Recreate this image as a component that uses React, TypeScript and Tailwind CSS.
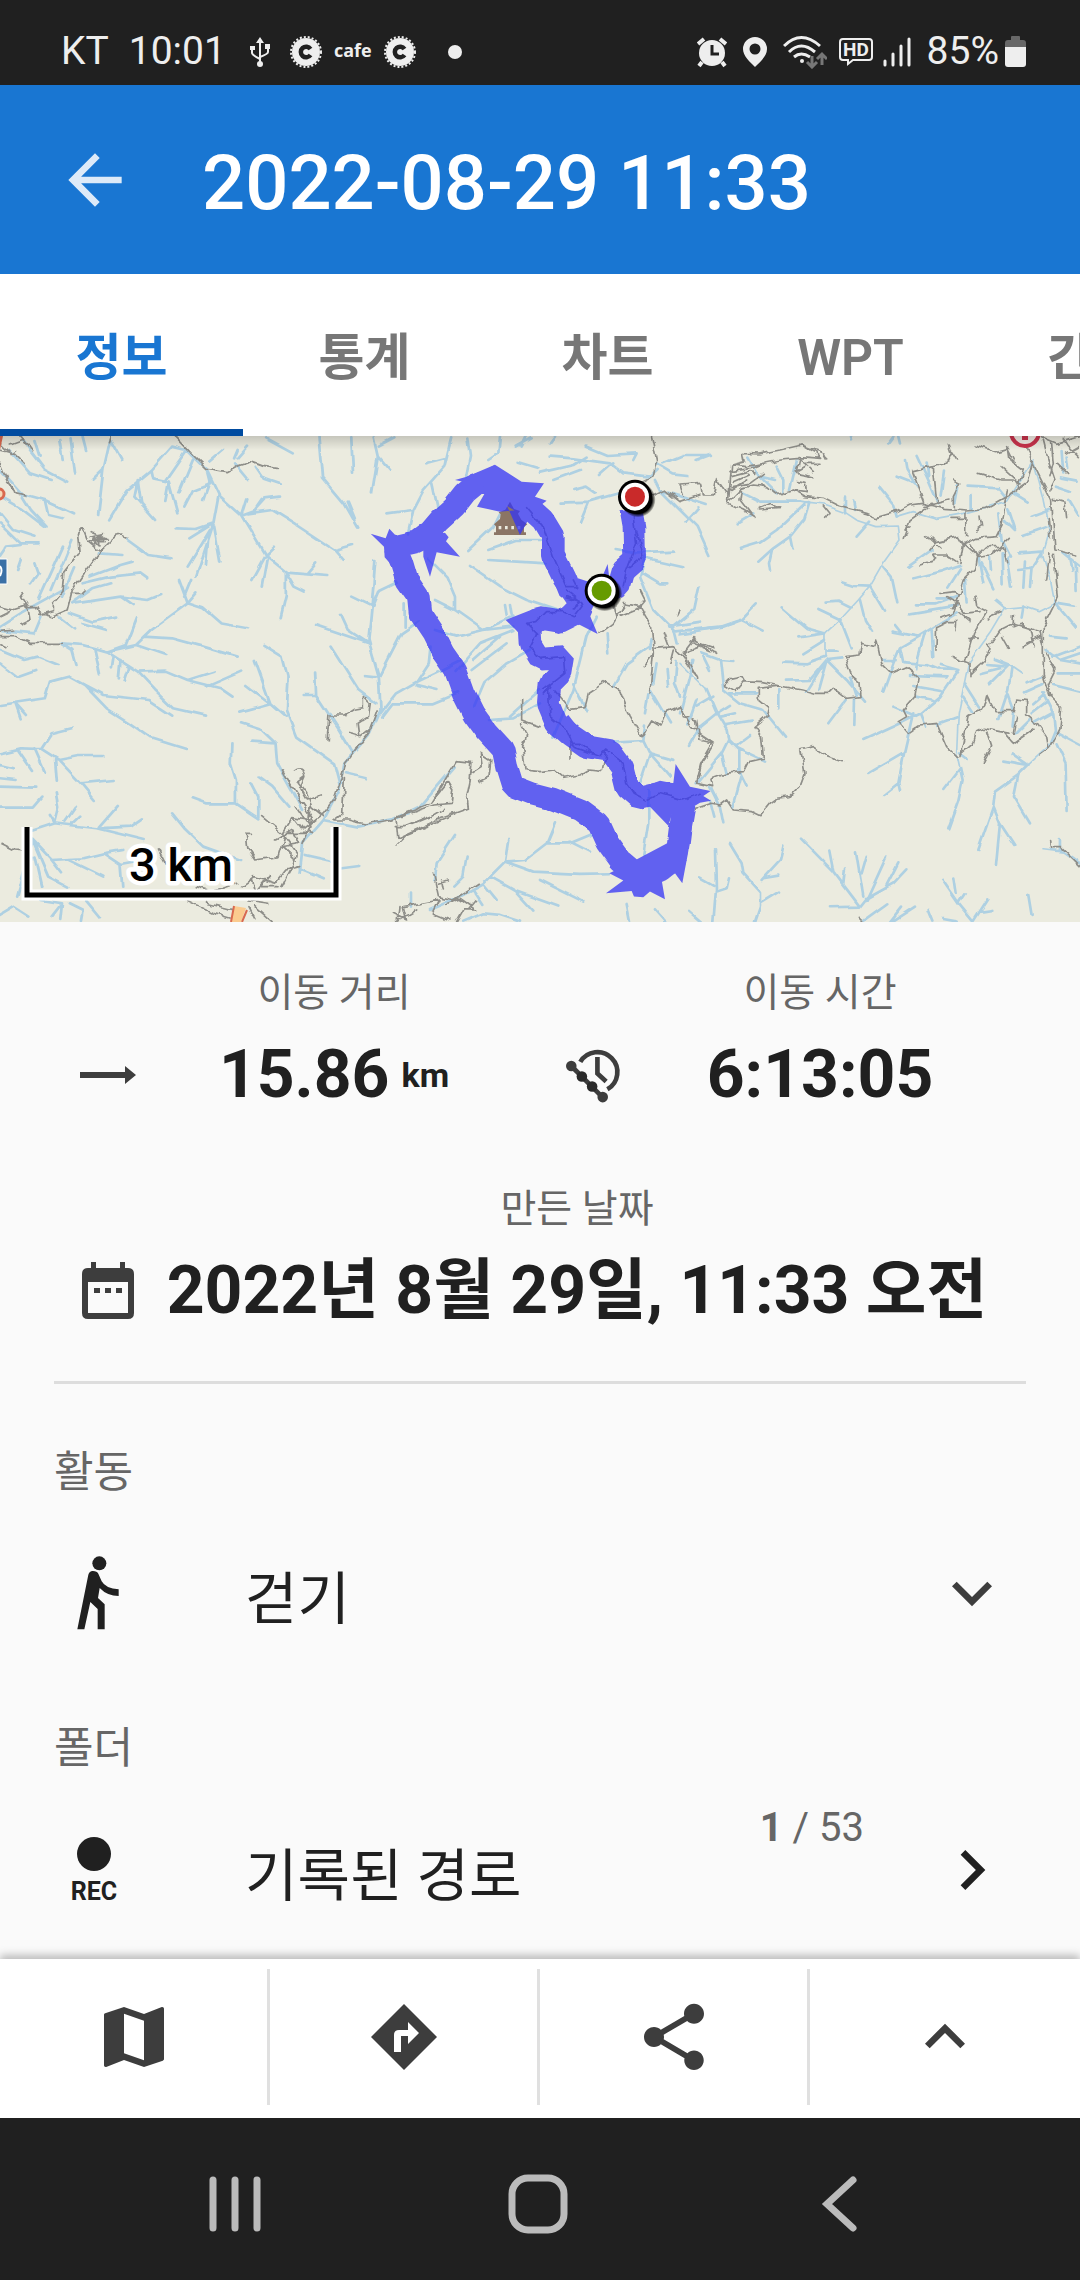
import { useState } from "react";
import { MdArrowBack, MdExpandLess, MdExpandMore, MdChevronRight, MdMap, MdShare } from "react-icons/md";

const tabs = ["정보", "통계", "차트", "WPT", "간격"];

// Each map sheet is drawn at three times the size it is shown at.
const westStreams =
  "M500 50L440 120 370 180 320 265M320 30L300 120 285 255M300 120L270 150M320 30L352 90M205 25L218 130M240 20L250 60M175 30L185 90M65 30L130 120 195 155M100 30L115 80M130 120L85 60M30 60L90 130 150 150M0 120L60 190 130 210 215 250M0 200L60 235 130 290M60 190L90 240 135 290M130 210L140 255 180 265M0 250L40 300 100 320M0 280L60 340 115 340M500 50L540 60 600 120 635 195 620 280 570 440M540 60L480 150M560 90L520 190M600 120L610 160 560 180 535 230M610 150L590 210M440 120L445 145 490 155 515 250M490 155L480 210M400 150L390 200 450 270M400 150L410 220M620 280L570 297 510 295M620 280L550 325M610 300L545 410M605 320L598 405M622 290L640 395" +
  "M635 195L700 255 770 375 830 425 830 500 815 565M700 255L740 240 770 205 810 200M720 250L790 240 860 285 970 360 1022 345M970 360L995 390M740 240L760 210M700 255L715 205M770 375L795 350M770 375L730 450M775 385L760 470M830 425L855 470 885 485M830 425L890 430 950 435M890 430L915 400M690 85L720 50M680 85L690 60M680 100L720 150M740 110L760 140 815 160M770 25L850 70M610 95L650 60M925 20L935 140 1000 220 1040 293M1010 215L1030 265M1020 25L1025 125M1085 25L1097 80 1080 190M1097 80L1130 120M1145 25L1100 50M1310 25L1290 110 1230 180 1200 240 1185 310M1235 100L1290 85M1255 160L1270 230M1125 250L1195 240" +
  "M720 595L640 580 590 535 545 520 440 600 395 645 310 665M545 520L520 450M545 520L570 490M535 500L555 450M690 680L590 650 500 625 420 620M365 645L395 565M395 645L480 675M180 640L240 645 310 665 400 725 480 722 545 750 640 775 675 800M545 750L620 725M600 770L700 725M310 665L365 645M400 725L450 780 505 835 598 857M275 660L290 730M180 640L210 660 222 705M330 680L325 715M350 690L345 745M375 710L362 750M245 765L300 795 430 810 500 857M0 825L130 805 145 755 200 740 245 765 310 835 370 875 440 925 540 957M45 820L75 855M45 820L60 865" +
  "M0 970L60 955 120 957 170 990 230 978 300 978M120 957L150 910 208 895M100 955L130 1025M170 990L235 1060 275 1110M235 1060L330 1050M160 990L165 1055M50 960L90 1020M0 1005L40 1015M0 1045L45 1050M0 1070L105 1073M0 1130L95 1130 120 1100M70 1210L160 1180 280 1195 380 1190 415 1165M160 1180L145 1155M165 1090L172 1130 160 1180M190 1175L220 1130M210 1180L230 1160M290 1190L345 1125M280 1195L420 1230M95 1230L150 1290 240 1285 300 1270 350 1305 430 1290M95 1230L140 1340 195 1370M95 1230L50 1400M100 1280L120 1370M150 1290L180 1330M200 1290L300 1340M300 1270L355 1260M350 1305L355 1370M0 1455L40 1430 85 1460M120 1410L180 1420 150 1460M200 1420L240 1440 235 1470M250 1415L290 1465M180 1420L175 1470" +
  "M500 1150L535 1195 590 1250 700 1290M560 1105L600 1120 685 1120 685 1050 670 1000 672 940M685 1120L750 1165M730 1060L750 1100 750 1160M750 1040L790 1070 840 1130M700 880L760 900 800 940 805 1000 880 1140M730 935L800 940M765 645L820 680 835 740 830 840 860 920 970 1000 985 1060M740 690L785 820 830 860M715 765L785 820M695 845L785 820M915 725L918 795 985 900 1025 970M885 795L918 795M960 650L1040 780 1090 820M1090 390L1080 520 1070 630 1100 740 1105 840 1075 910M1020 500L1080 530 1100 480 1150 455M990 555L1010 600 1070 640M915 585L1070 640M1100 740L1060 735M1100 740L1165 610 1215 575M1175 520L1175 590M1105 850L1150 790 1210 755 1245 700 1250 650M1110 860L1140 820 1260 820 1330 790M1210 755L1340 690M1210 765L1270 780M1075 910L1000 1000 985 1080 940 1170 880 1240 870 1330M1005 1030L1065 1045M940 1170L1040 1190 1140 1170 1220 1130 1320 1010M885 1275L970 1295M870 1315L940 1345M990 1315L1040 1308" +
  "M110 510L180 350M150 480L210 330M180 500L215 415M220 520L350 500 430 510 465 495M350 500L385 525M240 460L320 440 410 430M410 430L430 445M260 440L350 405 385 395M290 370L355 375M370 330L430 375 495 385M0 590L60 550 200 470M200 550L270 575 340 560M170 560L215 595M240 580L310 600M0 660L70 690 110 680 170 705M0 700L50 740 105 720M100 400L110 430 90 460M60 390L50 420M0 380L20 350 60 345M120 560L100 610 0 600M210 520L270 475 320 460";

const westRoads =
  "M510 20L560 75 600 115 660 125 690 108 730 95 770 110 808 115M320 20L315 35M0 60L40 70 70 100M0 100L25 160 45 190 75 198M30 45L70 30 95 65M60 20L85 55M0 40L30 70 45 60M240 295L225 310 230 370 185 430 180 490 155 520 155 545 120 555M240 295L255 335 290 365 250 420 210 480 195 540 150 560 110 550M290 365L315 340 340 318 355 315 370 322M255 335L310 325M250 480L240 490 210 490M265 305L300 320 270 325 305 335 265 335 290 345 285 310 275 345 300 308 262 318 312 328M0 530L40 540 70 530 110 530 120 555M70 485L60 500 80 530M0 560L40 540M60 585L90 570 85 540 70 525M0 620L50 620 90 640 175 640M0 605L40 600M0 640L20 650M0 1240L40 1260 65 1262" +
  "M820 1020L860 1090 910 1170M855 1020Q880 1000 885 1040L865 1055 890 1090 905 1130 940 1160M885 1040L870 1075 890 1110 930 1095M760 1160L820 1210 850 1160 905 1170 890 1210 830 1210 810 1280 740 1290 720 1260 715 1210 730 1210M850 1160L880 1200 940 1150 970 1110 990 1050 1000 1000 1070 910 1095 840M820 1210L860 1270 850 1310 820 1370M800 1230L850 1200 870 1240 820 1250 860 1290M860 1130L900 1190 880 1240M900 1130L895 1200 912 1205M1000 1040L995 1150 970 1170 1010 1170 1060 1182 1130 1170 1250 1120 1300 1055 1315 1080 1310 1120 1260 1125 1150 1165 1155 1225 1280 1165 1360 1135 1355 1100 1365 1050 1370 1000 1325 995 1250 1120M1145 1190L1180 1190 1250 1160 1290 1135M1150 1245L1180 1215 1320 1155M1370 1030L1400 1010 1395 970 1425 990 1420 1040 1390 1055" +
  "M950 930L955 855 1000 855 1030 835 1055 830 1055 800 1075 820 1070 860 1040 880 1045 920 1010 910M1045 920L1070 900M570 1370L620 1385 690 1360M545 1412L620 1450 670 1465M600 1420L680 1440M700 1370L740 1340 800 1360 830 1320 870 1310M720 1410L780 1420M740 1430L790 1475M720 1430L740 1470M730 1350L740 1390 780 1340 760 1370 810 1370M460 1260L480 1300";

const midStreams =
  "M382 20L390 80 378 140M480 20L475 70 445 90M530 50L575 25M560 20L545 50M630 40L645 20M530 95L595 115M600 128L700 105 740 80M635 80L700 85 810 100 850 130 930 140 950 120M740 50L800 75 890 70 880 90M780 135L820 100M640 150L720 120M950 100L1000 130 1045 135M970 100L1030 75 1110 75M665 218L745 215 835 190M745 215L720 275M700 180L740 170 770 190M945 150L960 180 1100 225M960 180L1020 240 1070 290 1108 375M1040 275L1075 235M385 360L460 290 480 250M445 360L530 330 600 330M445 390L530 395 620 400M390 408L480 470 560 510 650 540M265 385L320 440 345 500 345 540 430 600 520 590M285 510L345 540M285 600L350 620 430 600M430 600L520 560M350 720L420 640 520 600M400 690L480 620M395 720L500 640M400 830L430 760 500 700 570 660M500 555L495 525M515 555L510 525" +
  "M770 560L740 620 720 700 700 780 640 920M700 760L740 845M800 610L805 670M830 360L890 370 1000 365M910 385L1030 412M910 430L960 460 985 460M915 380L900 440 940 540 1000 600 1010 640M1000 605L1140 590 1200 570M985 590L1080 575M1000 590L1060 540 1075 470M930 650L860 700 820 770M950 700L940 760M980 720L985 770M1010 690L1005 760 1020 800M935 630L930 660M925 790L915 850M930 780L990 880M820 935L910 930 930 970 900 1060M930 970L990 1040M910 930L915 890M930 970L1000 990M925 1080L925 1180 910 1275M450 870L520 865 600 820M510 860L555 820 600 780" +
  "M645 1180L620 1240 555 1290 495 1295 505 1230M620 1240L690 1240 750 1215M690 1235L750 1265M495 1295L430 1360 340 1410 270 1440M495 1295L580 1325 720 1332 810 1330M600 1350L730 1415M450 1340L530 1385 655 1430M530 1390L580 1445M430 1360L470 1410M400 1380L430 1425M345 1215L290 1300 285 1350M380 1280L370 1340 340 1370M210 1385L210 1430M370 1475L430 1450 480 1455 540 1475M860 1425L870 1475M945 1435L980 1475";

const midRoads =
  "M935 20L950 90 940 140 900 160M930 200L975 180 1020 215 1080 195M1020 165L1085 160 1090 195 1120 195 1130 145 1160 190M1020 165L1030 195M880 260L890 340 860 420 850 470M890 300L910 380 870 410M560 230L610 290 640 380 680 470 710 470 700 450M680 480L730 520 700 560 670 545 620 545 590 575 560 580M680 500L720 510 700 540M560 580L590 610 570 650 600 685 670 680 675 730 625 770 630 860 680 900 700 950 780 980 800 960 850 1000 860 1060 880 1090 920 1110 960 1090 1030 1110 1080 1090M690 985L690 940 720 940 760 970M605 780L630 760 610 795 635 770M645 780L690 835 735 830 745 790 775 770 800 755 840 780 870 860 905 920 935 870 960 885 975 850 1025 830 1030 860 1070 870 1075 910 1120 940 1085 1000 1070 1060" +
  "M545 810L545 870 600 890M545 880L560 920 548 950 555 1020 600 1025 640 1020 670 1045 720 1035 745 1020 790 1025 800 960M850 530L820 580 780 610M850 520L900 530 935 590 940 670 930 790M900 480L915 510 890 540 840 560M820 510L830 560 860 520M940 670L910 710M945 655L1000 650 1030 680 1070 740M1000 660L990 700M1030 670L1060 630 1120 650M970 610L985 650M1010 560L1020 540M1060 625L1130 670M280 1330L295 1400 340 1410 415 1360M295 1360L325 1350M160 1450L200 1470 190 1430 300 1410 280 1450 330 1470M170 1475L230 1440M320 1420L360 1405 410 1440 370 1440 350 1475M305 1350L310 1380M180 1430L175 1470M410 1410L385 1440";

const eastStreams =
  "M50 90L90 75M170 280L220 250M190 190L240 215 360 215 385 220 370 270 330 320 280 355 235 395M370 225L290 300 240 335 180 353M330 320L337 355M280 355L270 400 273 422M205 80L240 140 290 190M290 110L310 150 310 190M350 95L330 180M240 140L285 150M570 275L530 320M595 170L640 225 650 260M495 200L495 250M520 215L525 240M610 410L635 440 652 520M485 457L520 468 570 470 615 545M540 510L555 570 577 605M440 518L475 515 515 535M415 537L485 570M305 532L380 595 435 610M355 622L435 610M480 565L515 655M370 670L435 630M310 698L380 700 435 680M318 752L390 750 440 690 485 685M440 690L380 785M440 690L415 780M440 690L500 750 555 815M510 740L530 800M500 810L448 880M525 810L523 885M440 665L470 665M0 610L130 590 185 570 230 523M185 570L248 602" +
  "M860 170L960 175 980 200M875 195L875 235M675 90L680 120 710 170M710 75L745 150 775 220M740 95L745 140M650 140L700 160M795 125L785 200M830 165L820 220M685 410L755 360M700 445L780 425 840 405M840 415L805 470M705 523L770 523 830 500M690 553L830 530M770 505L820 505M635 605L715 620 755 595 830 550M645 585L665 610M720 620L660 655 640 700 610 785M735 610L715 680 712 718M755 600L760 680M660 655L670 700M610 690L650 690M675 700L740 705 770 718 835 720M780 705L835 720 780 800 720 850 660 880 550 930M690 738L800 742M700 765L785 780M710 800L760 810M640 830L700 855M700 850L670 980 655 1060 610 1095M670 970L565 1032M655 1060L660 1082M720 850L735 890M840 1015L848 1050 835 1110 805 1195M840 1015L790 1080M855 760L900 830M850 800L880 845M775 885L830 865M840 970L860 985" +
  "M950 510L980 535M1030 530L1025 560M855 450L860 520M895 380L910 460M905 400L940 475M930 385L933 420M965 370L968 460M980 380L993 470M955 250L965 330 990 380M975 270L1005 300M985 235L1005 295M1000 190L1040 215M1055 260L1110 240M1030 315L1100 290M1015 370L1090 365M1035 395L1030 470M1055 415L1050 468M1015 420L1060 415 1090 370M1145 60L1150 130M1160 80L1165 120M1140 145L1190 155M1125 170L1170 185M1165 210L1195 260M1150 370L1200 410M1170 380L1178 425M1187 400L1190 480M1125 520L1185 530M1130 525L1185 590M1110 620L1160 625M1100 660L1140 690 1200 670M1120 680L1200 650M1140 690L1200 700M1130 730L1200 730M1120 765L1200 785M1040 760L1090 740M1035 790L1090 765M1060 820L1095 790M1055 850L1100 815M1060 880L1115 850M1090 790L1120 850 1125 900 1105 950M1045 1005L1015 1035 945 1085 940 1130 895 1260M1125 905L1200 945M970 992L1045 1005 995 970M1015 1035L1002 1100 1050 1180M940 1130L960 1180 948 1305M960 1180L1003 1245M1130 940L1157 1000 1160 1143M945 690L995 710 1025 730M925 705L980 710 930 760M900 730L960 715M995 710L985 780 955 870M980 785L1000 840 995 890M1050 870L1010 910" +
  "M65 670L120 690 130 780 180 820 250 840 315 920M120 690L160 693M70 680L90 720M150 790L230 790M295 780L295 835M80 780L110 850 140 900 145 930 125 970 75 1030 50 1060M110 850L150 825M110 850L60 890 30 945M50 830L100 800M40 690L20 770 0 850M135 885L215 872M145 930L175 960 175 1020 200 1070M170 945L210 915M170 955L255 995M125 970L140 1030M185 1040L160 1130M90 1070L120 1130 130 1180M90 1110L103 1160M120 860L165 850M50 810L25 880M105 1258L108 1380 100 1475M60 1342L100 1365M108 1385L140 1375 147 1345M150 1242L185 1300 190 1330 240 1385 240 1430 225 1475M310 1250L300 1290 245 1350M250 1345L295 1337M240 1420L297 1385M25 1445L60 1475M363 1226L460 1325 540 1430M448 1262L460 1325M495 1316L490 1360M453 1432L540 1430 560 1405 640 1360 682 1315M528 1264L550 1400M560 1278L545 1330M618 1283L560 1410M655 1297L615 1375M550 1475L622 1423M630 1475L663 1433M640 1472L705 1430M787 1350L835 1420 880 1475 925 1405M823 1343L830 1390M855 1390L835 1420M905 1445L937 1440M743 1440L757 1475M787 1467L830 1475M1045 1395L1055 1455M1090 1258L1150 1265 1200 1300M1140 1230L1140 1260M510 20L513 28M655 20L660 40M625 40L640 20";

const eastRivers =
  "M385 220L430 225 500 250 530 270 590 290 655 288 660 330 610 400 570 470 535 510 480 570 435 610 435 680M650 260L700 245 770 265 850 250 980 215 1060 90 1090 200 1110 300 1090 370 1110 440 1125 520 1075 545 1030 530 975 535 930 610 865 700 835 850 830 970 840 1015M1105 950L1045 1005M0 700L80 780";

const eastRoads =
  "M190 70L240 72 300 60 365 45 430 70 440 90M190 70L195 95 155 105 145 220 190 240 225 262M365 45L400 65 425 85 360 80 370 100 420 100M155 105L200 110 300 90 360 85 350 130 400 140M150 125L215 115 240 105M155 140L210 125 230 130M160 155L205 135M155 170L210 160 250 130M150 180L200 150M150 210L185 175 220 165 260 170 290 195 340 180 380 185 375 160 350 155M345 125L380 105 400 125M185 175L180 210 215 255M235 235L270 220 300 235 235 240M340 180L375 200 430 205 480 230 560 250 590 263 650 245 690 225 730 220 790 235 860 240 920 235 990 195 1040 160 1060 90 1040 50M430 225L450 250 440 268M670 325L690 270 740 235M675 300L690 290M695 120L730 215M700 125L760 110 770 215M760 110L800 100 815 65 830 90M805 42L815 70M820 150L840 160 820 200 820 235M735 230L770 220 810 210" +
  "M885 45L950 65 985 55 990 90 1030 120 1010 180M965 110L1010 150 1020 165M895 130L960 150 1000 150M980 50L1000 90M985 180L975 230 965 290 950 320 890 325 850 345 840 400M858 245L857 320M737 320L770 335 835 320 850 345M770 335L750 360M755 330L780 352M810 265L855 265M900 255L905 290 890 300M720 405L770 390 760 375 800 375 830 395M890 380L885 415 850 450 835 500 820 550 780 565M850 345L890 380 920 350 960 350 985 325M870 345L890 380 930 375 970 350 980 395M780 490L820 485 840 490M885 495L890 530 920 545 880 610 855 695M830 520L850 550 900 545M770 590L800 575 830 575 828 605M770 590L768 655M925 570L935 555 960 545M840 550L870 575M800 500L835 515 820 530M870 625L895 628" +
  "M820 680L870 700 870 740M870 735L915 690 930 660 920 640 940 630 960 600 1000 580 1080 605 1090 650M1000 560L1000 590 1025 580 1050 600 1060 650M965 620L985 655M880 720L915 690M1030 650L1080 620 1040 640M1055 90L1100 180 1115 210 1125 360 1190 375M1110 365L1100 450M1105 260L1110 320M1120 370L1135 500 1090 590 1090 740 1110 800M1085 20L1130 40 1200 20M1105 90L1125 150 1110 180M1090 30L1105 90M1130 100L1160 130M1120 205L1155 215 1160 260M1150 25L1165 50 1195 80M1160 70L1195 50M1115 40L1120 100 1110 140M1100 670L1125 720 1105 760 1115 800 1145 830 1140 900 1115 950 1080 975" +
  "M840 975L880 940 890 905 910 895 960 905 990 910M840 980L865 860 910 835 920 795 945 845 1000 845 1010 810 1040 815 1040 855 1070 880 1100 920 1105 950M920 905L935 950 910 1000M970 905L1000 940 1065 895M1010 860L1000 910M495 680L540 675 545 640 585 650 590 630 605 700 635 730 680 710 715 740 705 800 670 840 680 860 655 875 685 910 720 885 770 880 800 950 835 985M495 680L515 740 540 760 543 800 500 805 460 775 445 790 400 790 365 780 300 768 250 758 190 755 165 785 130 765 150 745 185 738 195 755M235 775L300 768M235 775L235 805 265 830 260 860 225 890 245 920 250 985 205 995 190 1025 130 1030 90 1045 95 1070 50 1060 65 1000 100 940 60 930 55 895 35 890 0 830M50 1135L95 1120 120 1125 140 1110 160 1140 215 1145 240 1157 270 1120 290 1105 330 1100 360 1070 375 1030 362 960 400 950 440 980 490 995M10 670L60 650 95 665M10 670L50 745M30 635L90 660M1112 1235L1115 1250 1140 1250 1200 1310M535 1465L545 1475";

function Sheet({ transform, streams, roads, rivers }: { transform: string; streams: string; roads: string; rivers?: string }) {
  return (
    <g transform={transform} fill="none" strokeLinecap="round" strokeLinejoin="round">
      <g filter="url(#meander)" stroke="#aed0e2">
        <path d={streams} strokeWidth="8" />
        {rivers && <path d={rivers} strokeWidth="5" />}
      </g>
      <path d={roads} stroke="#8e8e89" strokeWidth="5" filter="url(#winding)" />
    </g>
  );
}

function Marker({ cx, cy, color }: { cx: number; cy: number; color: string }) {
  return (
    <g>
      <circle cx={cx + 9} cy={cy + 9} r="52" fill="url(#markerShadow)" />
      <circle cx={cx} cy={cy} r="51" fill="#000" />
      <circle cx={cx} cy={cy} r="42" fill="#fff" />
      <circle cx={cx} cy={cy} r="30" fill={color} />
    </g>
  );
}

function RouteMap() {
  return (
    <svg viewBox="0 0 1080 486" className="block w-full bg-[#ebebdf]" role="img" aria-label="경로 지도">
      <defs>
        <radialGradient id="markerShadow">
          <stop offset="0.8" stopColor="#000" />
          <stop offset="1" stopColor="#000" stopOpacity="0.15" />
        </radialGradient>
        <linearGradient id="barShadow" x1="0" y1="0" x2="0" y2="1">
          <stop offset="0" stopColor="#000" stopOpacity="0.16" />
          <stop offset="1" stopColor="#000" stopOpacity="0" />
        </linearGradient>
        {/* gives the straight segments a natural bend */}
        <filter id="meander" colorInterpolationFilters="sRGB">
          <feTurbulence type="fractalNoise" baseFrequency="0.02" numOctaves="1" seed="3" />
          <feDisplacementMap in="SourceGraphic" scale="18" xChannelSelector="R" yChannelSelector="G" />
        </filter>
        <filter id="winding" colorInterpolationFilters="sRGB">
          <feTurbulence type="fractalNoise" baseFrequency="0.04" numOctaves="1" seed="7" />
          <feDisplacementMap in="SourceGraphic" scale="22" xChannelSelector="R" yChannelSelector="G" />
        </filter>
      </defs>
      <Sheet transform="translate(0 -6) scale(.3444 .3333)" streams={westStreams} roads={westRoads} />
      <Sheet transform="translate(340 -6) scale(.3333)" streams={midStreams} roads={midRoads} />
      <Sheet transform="translate(680 -6) scale(.3333)" streams={eastStreams} roads={eastRoads} rivers={eastRivers} />

      {/* points of interest on the edges */}
      <circle cx="-1" cy="58" r="5" fill="#f5d9b8" stroke="#d9694f" strokeWidth="3" />
      <path d="M0 0h3l-3 14z" fill="#d9694f" />
      <path d="M0 123h7v25h-7" fill="#3a70a6" stroke="#fff" strokeWidth="1" />
      <path d="M0 130q3 4 0 10" fill="none" stroke="#fff" strokeWidth="2" />
      <path d="M234 470l12 2-5 14h-10z" fill="#fbcb8f" />
      <path d="M234 470l-3 16M247 474l-5 12" stroke="#d9694f" strokeWidth="2" />
      <circle cx="1025" cy="-4" r="14" fill="#f2ece4" stroke="#c8324b" strokeWidth="4" />
      <path d="M1022 -2h6v6h-6z" fill="#c8324b" />

      <g transform="translate(340 -6) scale(.3333)">
        <path
          d="M510 215l12 22 18 6-6 8 10 18 18 14-10 8v16h6v8H462v-8h6v-18l-6-6 18-16 2-14-6-6 20-8z"
          fill="#8b7565"
        />
        <path d="M476 288h8v10h-8zm19 0h8v10h-8zm19 0h8v10h-8zm19 0h8v10h-8z" fill="#ebebdf" />

        {/* recorded track */}
        <g opacity="0.75" fill="#3434f6" stroke="none">
          <path
            d="M872 235L882 290 884 390 850 420 836 470 790 490 720 490 690 485 672 440 640 375 640 320 610 270 560 225 500 190 455 148 405 165 375 190 342 232 300 270 270 305 230 335 165 350 185 400 200 450 235 500 240 550 280 610 310 670 345 720 370 790 400 850 440 905 490 960 500 1010 518 1068 580 1092 640 1108 720 1140 775 1180 800 1235 840 1290 905 1345 960 1320 1010 1280 1020 1200 1032 1130 1020 1090 960 1090 900 1105 860 1070 845 1010 810 962 740 950 690 915 650 880 625 820 630 760 660 730 668 680 600 685 573 640 570 590 600 565 660 575 720 545 740 500"
            fill="none"
            stroke="#3434f6"
            strokeWidth="68"
            strokeLinejoin="bevel"
            filter="url(#meander)"
          />
          <path d="M92 311L137 325 148 296 172 322 200 316 215 360 150 400 134 382 132 350zM250 320L315 308 326 322 318 334 360 380 290 367 270 440 250 380zM400 140L465 104 545 155 612 160 585 200 620 212 590 235 480 245 411 230 440 180zM500 225L540 315 570 260zM787 440L803 402 808 445zM640 460L700 440 760 460 745 545 773 612 710 580 655 612 640 560 680 520zM497 570L590 533 640 590 550 625 528 600zM1007 1002L1050 1070 1112 1083 1090 1098 1113 1112 1080 1118 1060 1130 1055 1200 1044 1270 1027 1360 1005 1330 965 1350 975 1408 930 1385 910 1402 882 1400 875 1383 798 1390 850 1352 808 1330 850 1310 1000 1230 1000 1140 985 1187 930 1130 826 1080 860 1060 900 1075 960 1052 1000 1060z" />
          <path d="M345 150L380 140 465 104 440 170zM655 880L685 855 712 890 690 930z" />
        </g>

        <Marker cx={885} cy={200} color="#c92a2a" />
        <Marker cx={785} cy={482} color="#669b00" />
      </g>

      {/* scale bar */}
      <g fill="none">
        <path d="M27 391v68h309v-68" stroke="#fff" strokeWidth="11" />
        <path d="M27 391v68h309v-68" stroke="#000" strokeWidth="5" />
      </g>
      <text
        x="181"
        y="445"
        textAnchor="middle"
        fontSize="47"
        fontWeight="500"
        fill="#000"
        stroke="#fff"
        strokeWidth="9"
        strokeLinejoin="round"
        paintOrder="stroke"
      >
        3 km
      </text>
      <rect width="1080" height="14" fill="url(#barShadow)" />
    </svg>
  );
}

function CafeBadge() {
  return (
    <svg className="size-8" viewBox="0 0 32 32" aria-hidden="true">
      <circle cx="16" cy="16" r="14" fill="#eee" />
      <circle cx="16" cy="16" r="15" fill="none" stroke="#eee" strokeWidth="2" strokeDasharray="2 2" />
      <path d="M20.500 13a5.300 5.300 0 1 0 0 6" fill="none" stroke="#202020" strokeWidth="4.500" />
    </svg>
  );
}

function StatusBar() {
  return (
    <div className="flex h-[85px] items-center justify-between bg-[#202020] pt-[18px] pr-[54px] pl-[61px] text-[39px] leading-none text-[#eee]">
      <div className="flex items-center">
        <span>KT</span>
        <span className="ml-5">10:01</span>
        <svg className="ml-6 h-8 w-5" viewBox="0 0 20 32" fill="none" stroke="#eee" strokeWidth="2" aria-hidden="true">
          <path d="M10 6v20M2 13v4q0 2 8 6M18 12v4q0 2-8 5" />
          <path d="M10 1l4 6H6zM0 10h5v4H0zM15 8h5v5h-5z" fill="#eee" stroke="none" />
          <circle cx="10" cy="28" r="3" fill="#eee" stroke="none" />
        </svg>
        <div className="ml-5 flex items-center gap-3">
          <CafeBadge />
          <span className="pb-1 font-['Open_Sans'] text-[18px] font-bold">cafe</span>
          <CafeBadge />
        </div>
        <span className="ml-8 size-[14px] rounded-full bg-[#eee]" />
      </div>

      <div className="flex items-center">
        <svg className="h-8 w-[30px]" viewBox="0 0 30 32" aria-hidden="true">
          <circle cx="15" cy="17" r="13" fill="#eee" />
          <path d="M1 8l6-5M29 8l-6-5M5 26l-3 4M25 26l3 4" stroke="#eee" strokeWidth="4" />
          <path d="M15 9v9h7" fill="none" stroke="#202020" strokeWidth="3" />
        </svg>
        <svg className="ml-4 h-8 w-6" viewBox="0 0 24 32" aria-hidden="true">
          <path fillRule="evenodd" fill="#eee" d="M12 1a12 12 0 0 0-12 12c0 7 7 13 12 18 5-5 12-11 12-18A12 12 0 0 0 12 1zm0 6.500a5.500 5.500 0 1 1 0 11 5.500 5.500 0 0 1 0-11z" />
        </svg>
        <svg className="ml-4 h-[34px] w-11" viewBox="0 0 44 34" fill="none" stroke="#eee" strokeWidth="3" aria-hidden="true">
          <path d="M1 11q17-17 36 0M6 17q12-12 26 0M11 22q7-6 16 0" />
          <circle cx="19" cy="26" r="2" fill="#eee" stroke="none" />
          <path d="M29 21v11M24 27l5 5 5-5M39 30V19M34 24l5-5 5 5" stroke="#777" />
        </svg>
        <svg className="ml-3 h-8 w-[34px]" viewBox="0 0 34 32" aria-hidden="true">
          <path d="M4 3h26q3 0 3 3v15q0 3-3 3H14l-5 4v-4H4q-3 0-3-3V6q0-3 3-3z" fill="none" stroke="#eee" strokeWidth="2" />
          <text x="17" y="20" textAnchor="middle" fontSize="19" fontWeight="700" fill="#eee">HD</text>
        </svg>
        <svg className="ml-[10px] h-8 w-7" viewBox="0 0 28 32" stroke="#eee" strokeWidth="3" strokeLinecap="round" aria-hidden="true">
          <path d="M2 25v4M10 18v11M18 10v19M26 3v26" />
        </svg>
        <span className="ml-4">85%</span>
        <svg className="ml-1.5 h-8 w-[21px]" viewBox="0 0 21 32" aria-hidden="true">
          <path d="M6 1q0-1 1-1h7q1 0 1 1v3h3q3 0 3 3v5H0V7q0-3 3-3h3z" fill="#686868" />
          <path d="M0 11h21v17q0 3-3 3H3q-3 0-3-3z" fill="#eee" />
        </svg>
      </div>
    </div>
  );
}

function Stat({ icon, label, value, unit }: { icon: React.ReactNode; label: string; value: string; unit?: string }) {
  return (
    <div className="grid grid-cols-[56px_1fr] items-center pr-2 pl-[26px]">
      <div className="col-start-2 text-center text-[39px] leading-[56px] text-[#666]">{label}</div>
      <div className="col-start-1 flex h-[108px] w-14 items-center justify-center text-[#3d3d3d]">{icon}</div>
      <div className="text-center text-[66px] leading-[108px] font-bold whitespace-nowrap">
        {value}
        {unit && <span className="ml-3 align-[10px] text-[34px] leading-none">{unit}</span>}
      </div>
    </div>
  );
}

function ArrowIcon() {
  return (
    <svg className="h-5 w-14" viewBox="0 0 56 20" fill="currentColor" aria-hidden="true">
      <path d="M0 7h45V1l11 9-11 9v-6H0z" />
    </svg>
  );
}

function TrackTimeIcon() {
  return (
    <svg className="size-[60px]" viewBox="0 0 180 180" fill="none" stroke="currentColor" strokeWidth="15" aria-hidden="true">
      <path d="M46 48A64 64 0 1 1 133 136M101 32v53l28 26" />
      <path d="M17 61L117 161" />
      <g fill="currentColor" stroke="none">
        <circle cx="17" cy="61" r="17" />
        <circle cx="51" cy="95" r="17" className="fill-[#2a2a2a]" />
        <circle cx="84" cy="127" r="17" className="fill-[#2a2a2a]" />
        <circle cx="118" cy="161" r="17" />
      </g>
    </svg>
  );
}

function CalendarIcon() {
  return (
    <svg className="h-[58px] w-[52px]" viewBox="0 0 52 58" aria-hidden="true">
      <path
        fill="currentColor"
        fillRule="evenodd"
        d="M9 0h5v6h24V0h5v6h3q6 0 6 6v39q0 6-6 6H6q-6 0-6-6V12q0-6 6-6h3zM6 20v31h40V20z"
      />
      <path d="M12 26h6v5h-6zM23 26h6v5h-6zM34 26h6v5h-6z" fill="currentColor" />
    </svg>
  );
}

function WalkIcon() {
  return (
    <svg className="h-[74px] w-[42px]" viewBox="0 0 126 222" fill="currentColor" aria-hidden="true">
      <circle cx="67" cy="22" r="21" />
      <path d="M34 56q4-12 14-11 12 0 16 8l10 23q12 22 51 24v20q-34 0-57-24l-5 30 20 19v75H62v-61L40 138 22 220H1z" />
    </svg>
  );
}

function DirectionsIcon() {
  return (
    <svg className="size-[66px]" viewBox="0 0 66 66" aria-hidden="true">
      <path d="M33 0l33 33-33 33L0 33z" fill="currentColor" />
      <path d="M23 48V31q0-5 5-5h9v-8l11 11-11 11v-8h-7v16z" fill="#fff" />
    </svg>
  );
}

export default function App() {
  const [activeTab, setActiveTab] = useState(0);

  return (
    <div className="flex min-h-screen flex-col overflow-hidden bg-[#fafafa] font-['Roboto','Noto_Sans_CJK_KR',sans-serif] text-[#202020]">
      <StatusBar />

      {/* Header */}
      <header className="flex h-[189px] items-center bg-[#1976d2] pl-[55px] text-white">
        <button aria-label="뒤로" className="text-white/85">
          <MdArrowBack className="size-20" />
        </button>
        <h1 className="ml-[67px] pt-1.5 text-[76px] leading-none font-medium">2022-08-29 11:33</h1>
      </header>

      {/* Tabs */}
      <nav className="flex h-[162px] overflow-x-auto overflow-y-hidden bg-white [scrollbar-width:none]">
        {tabs.map((tab, i) => (
          <button
            key={tab}
            onClick={() => setActiveTab(i)}
            className={`w-[243px] shrink-0 border-b-[7px] pt-3.5 text-[50px] font-semibold ${
              i === activeTab ? "border-[#004ba0] text-[#1976d2]" : "border-transparent text-[#777]"
            }`}
          >
            {tab}
          </button>
        ))}
      </nav>

      <main className="flex-1">
        <RouteMap />

        {/* Summary */}
        <section className="mx-[54px] border-b-[3px] border-[#ddd] pt-[43px] pb-9">
          <div className="grid grid-cols-2">
            <Stat icon={<ArrowIcon />} label="이동 거리" value="15.86" unit="km" />
            <Stat icon={<TrackTimeIcon />} label="이동 시간" value="6:13:05" />
          </div>
          <div className="mt-[52px]">
            <Stat icon={<CalendarIcon />} label="만든 날짜" value="2022년 8월 29일, 11:33 오전" />
          </div>
        </section>

        {/* Activity */}
        <section className="px-[54px] pt-[58px]">
          <h2 className="text-[43px] leading-[60px] text-[#666]">활동</h2>
          <button className="flex h-[182px] w-full items-center pr-[14px] text-left">
            <span className="flex w-[88px] justify-center">
              <WalkIcon />
            </span>
            <span className="ml-[103px] flex-1 pt-3 text-[57px] leading-none">걷기</span>
            <MdExpandMore className="size-20 text-[#3d3d3d]" />
          </button>
        </section>

        {/* Folder */}
        <section className="px-[54px] pt-[34px]">
          <h2 className="text-[43px] leading-[60px] text-[#666]">폴더</h2>
          <button className="flex h-[180px] w-full items-center pt-1 pr-[14px] text-left">
            <span className="flex w-20 flex-col items-center">
              <span className="size-[34px] rounded-full bg-[#202020]" />
              <span className="mt-2 text-[25px] leading-none font-bold">REC</span>
            </span>
            <span className="ml-[111px] flex-1 pt-3 text-[57px] leading-none">기록된 경로</span>
            <span className="mr-[68px] self-start pt-4 text-[40px] text-[#666]">
              <b>1</b> / 53
            </span>
            <MdChevronRight className="size-20" />
          </button>
        </section>
      </main>

      {/* Actions */}
      <div className="grid h-[159px] grid-cols-4 items-center divide-x-[3px] divide-[#e0e0e0] bg-white pb-1 text-[#3d3d3d] shadow-[0_-4px_8px_rgba(0,0,0,0.25)]">
        <button aria-label="지도" className="flex h-[136px] items-center justify-center">
          <MdMap className="size-20" />
        </button>
        <button aria-label="길찾기" className="flex h-[136px] items-center justify-center">
          <DirectionsIcon />
        </button>
        <button aria-label="공유" className="flex h-[136px] items-center justify-center">
          <MdShare className="size-20" />
        </button>
        <button aria-label="더보기" className="flex h-[136px] items-center justify-center">
          <MdExpandLess className="size-20" />
        </button>
      </div>

      {/* System navigation */}
      <div className="flex h-[162px] items-center justify-between bg-[#202020] pt-[10px] pr-[210px] pl-[206px] text-[#bbb]">
        <button aria-label="최근 앱">
          <svg className="size-[58px]" viewBox="0 0 58 58" stroke="currentColor" strokeWidth="7" strokeLinecap="round">
            <path d="M7 5v48M29 5v48M51 5v48" />
          </svg>
        </button>
        <button aria-label="홈">
          <svg className="size-[60px]" viewBox="0 0 60 60" fill="none" stroke="currentColor" strokeWidth="7">
            <rect x="4" y="4" width="52" height="52" rx="16" />
          </svg>
        </button>
        <button aria-label="뒤로 가기">
          <svg className="size-[58px]" viewBox="0 0 58 58" fill="none" stroke="currentColor" strokeWidth="7" strokeLinecap="round">
            <path d="M41 5L15 29l26 24" />
          </svg>
        </button>
      </div>
    </div>
  );
}
